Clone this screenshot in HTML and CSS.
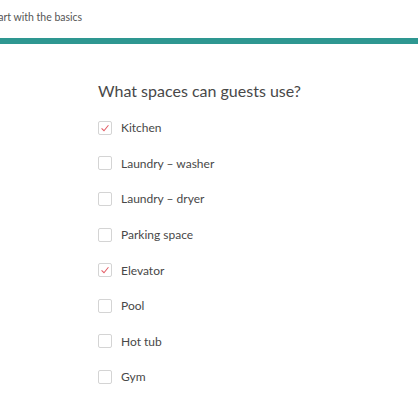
FILE: index.html
```html
<!DOCTYPE html>
<html lang="en">
<head>
    <meta charset="UTF-8">
    <meta name="viewport" content="width=device-width, initial-scale=1.0">
    <title>Spaces</title>
    <link rel="stylesheet" href="styles.css">
</head>
<body>
    <div class="top-bar">
        <span class="step-title">Start with the basics</span>
    </div>
    <div class="progress">
        <div class="progress-fill"></div>
    </div>

    <div class="container">
        <h1>What spaces can guests use?</h1>
        <ul class="spaces">
            <li class="space checked"><span class="box"><svg viewBox="0 0 14 14"><path d="M3 7.5 L5.8 10.2 L11 3.8"/></svg></span>Kitchen</li>
            <li class="space"><span class="box"></span>Laundry – washer</li>
            <li class="space"><span class="box"></span>Laundry – dryer</li>
            <li class="space"><span class="box"></span>Parking space</li>
            <li class="space checked"><span class="box"><svg viewBox="0 0 14 14"><path d="M3 7.5 L5.8 10.2 L11 3.8"/></svg></span>Elevator</li>
            <li class="space"><span class="box"></span>Pool</li>
            <li class="space"><span class="box"></span>Hot tub</li>
            <li class="space"><span class="box"></span>Gym</li>
        </ul>
    </div>
</body>
</html>
```

FILE: styles.css
```css
body {
    font-family: 'Lato', 'Liberation Sans', sans-serif;
    background-color: white;
    margin: 0;
    padding: 0;
    color: #484848;
    overflow: hidden;
}
.top-bar {
    height: 38px;
    display: flex;
    align-items: center;
    margin-left: -11px;
}
.step-title {
    font-size: 10.5px;
    color: #555;
    margin-top: -4px;
}
.progress {
    height: 6px;
    background-color: #e6fbfb;
}
.progress-fill {
    height: 100%;
    width: 100%;
    background-color: #2e9791;
}
.container {
    padding: 37px 0 0 98px;
}
h1 {
    font-size: 16px;
    font-weight: 400;
    margin: 0 0 10px 0;
    color: #484848;
}
.spaces {
    list-style: none;
    margin: 0;
    padding: 0;
}
.space {
    display: flex;
    align-items: center;
    height: 35.6px;
    font-size: 12px;
    color: #484848;
}
.box {
    width: 12px;
    height: 12px;
    border: 1px solid #d4d4d4;
    border-radius: 2px;
    margin-right: 9px;
    display: flex;
    align-items: center;
    justify-content: center;
}
.box svg {
    width: 12px;
    height: 12px;
    fill: none;
    stroke: #e35d66;
    stroke-width: 1.2;
}
```
